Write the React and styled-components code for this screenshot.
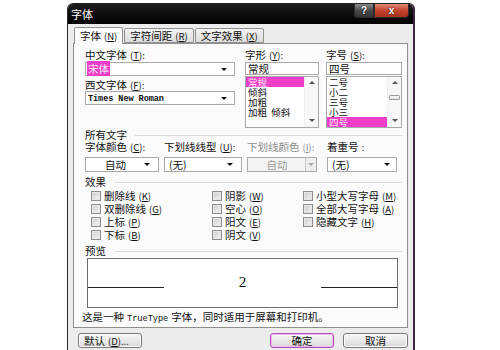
import React from 'react';
import styled, { createGlobalStyle } from 'styled-components';

const CJK = `"Noto Sans CJK SC", "Liberation Sans", sans-serif`;
const MONO = `"Liberation Mono", "Noto Sans CJK SC", monospace`;

const GlobalStyle = createGlobalStyle`
  html, body { margin: 0; padding: 0; background: #fff; }
  body { font-family: ${CJK}; font-size: 10.5px; color: #111; }
  * { box-sizing: border-box; }
`;

const Dialog = styled.div`
  margin: 3px 0 0 67px;
  width: 348px;
  height: 347px;
  background: #ececec;
  border-left: 1px solid #2a2a2a;
  border-right: 2px solid #3d2346;
  border-top: 1px solid #222;
  border-radius: 6px 6px 0 0;
  overflow: hidden;
  display: flex;
  flex-direction: column;
`;

const TitleBar = styled.div`
  height: 20px;
  flex: none;
  background: linear-gradient(#1c1c1c, #000);
  display: flex;
  align-items: flex-start;
  justify-content: space-between;
  padding: 0 4px 0 3px;
  color: #fff;
`;

const Title = styled.span`
  font-size: 11px;
  line-height: 20px;
`;

const WinButtons = styled.div`
  display: flex;
`;

const WinBtn = styled.div`
  width: ${p => p.$w}px;
  height: 14px;
  display: flex;
  align-items: center;
  justify-content: center;
  color: #fff;
  font: bold 10px "Liberation Sans", sans-serif;
  border: 1px solid #2b2b2b;
  border-top: none;
  background: ${p => p.$close
    ? 'linear-gradient(#e08a74, #c4452e 50%, #a8301c)'
    : 'linear-gradient(#8a8a8a, #4c4c4c 50%, #333)'};
  border-radius: ${p => p.$close ? '0 0 4px 0' : '0 0 0 4px'};
  text-shadow: 0 0 2px #000;
`;

const Body = styled.div`
  flex: 1;
  padding: 2px 5px 0 5px;
  display: flex;
  flex-direction: column;
`;

const TabRow = styled.div`
  display: flex;
  align-items: flex-end;
  height: 17px;
  padding-left: 1px;
  position: relative;
  z-index: 1;
`;

const Tab = styled.div`
  height: ${p => (p.$active ? 17 : 15)}px;
  padding: 0 5px;
  margin-right: 1px;
  border: 1px solid #8f8f8f;
  border-bottom: ${p => (p.$active ? 'none' : '1px solid #8f8f8f')};
  border-radius: 2px 2px 0 0;
  background: ${p => (p.$active ? '#fbfbfb' : 'linear-gradient(#f3f3f3, #dcdcdc)')};
  margin-bottom: ${p => (p.$active ? -1 : 0)}px;
  display: flex;
  align-items: center;
  line-height: 12px;
  white-space: nowrap;
`;

const Panel = styled.div`
  height: 285px;
  border: 1px solid #8f8f8f;
  background: #fbfbfb;
  padding: 5px 4px 0 11px;
  display: flex;
  flex-direction: column;
`;

const Acc = styled.span`
  font-size: 9.5px;
  margin-left: 3px;
  & u { text-decoration-thickness: 1px; text-underline-offset: 1px; }
`;

const Label = styled.div`
  height: 12px;
  line-height: 12px;
  white-space: nowrap;
  color: ${p => (p.$disabled ? '#8e8e8e' : '#111')};
  margin-top: ${p => p.$mt || 0}px;
`;

const TopRow = styled.div`
  display: flex;
`;

const Col = styled.div`
  width: ${p => p.$w}px;
  margin-left: ${p => p.$ml || 0}px;
  display: flex;
  flex-direction: column;
`;

const Combo = styled.div`
  height: ${p => p.$h || 14}px;
  margin-top: ${p => p.$mt || 0}px;
  border: 1px solid #a9a9a9;
  background: ${p => (p.$disabled ? '#f3f3f3' : '#fff')};
  display: flex;
  align-items: center;
  padding-left: 1px;
`;

const ComboText = styled.span`
  flex: 1;
  line-height: 12px;
  text-align: ${p => (p.$center ? 'center' : 'left')};
  color: ${p => (p.$disabled ? '#9a9a9a' : '#111')};
  padding-left: ${p => p.$pl || 0}px;
  white-space: nowrap;
`;

const MonoText = styled.span`
  font-family: ${MONO};
  font-size: 8.6px;
  font-weight: bold;
  letter-spacing: -0.1px;
  padding-left: 1px;
`;

const Highlight = styled.span`
  background: #ef3fc9;
  color: #ffe6f7;
  padding: 0 1px;
  line-height: 11px;
`;

const Arrow = styled.span`
  width: 0;
  height: 0;
  border-left: 3px solid transparent;
  border-right: 3px solid transparent;
  border-top: 3px solid ${p => p.$c || '#111'};
  margin-right: ${p => p.$mr ?? 7}px;
`;

const ArrowBox = styled.span`
  width: 11px;
  height: 100%;
  border-left: 1px solid #c9c9c9;
  background: #efefef;
  display: flex;
  align-items: center;
  justify-content: center;
`;

const Input = styled.div`
  height: 13px;
  margin-top: 1px;
  border: 1px solid #a9a9a9;
  background: #fff;
  line-height: 11px;
  padding-left: 2px;
`;

const ListBox = styled.div`
  height: 52px;
  margin-top: 1px;
  border: 1px solid #a9a9a9;
  background: #fff;
  display: flex;
  overflow: hidden;
`;

const ListItems = styled.div`
  flex: 1;
  overflow: hidden;
`;

const ListItem = styled.div`
  height: 10px;
  line-height: 10px;
  font-size: 9.5px;
  padding-left: 2px;
  white-space: nowrap;
  background: ${p => (p.$sel ? '#ef3fc9' : 'transparent')};
  color: ${p => (p.$sel ? '#ffe6f7' : '#111')};
`;

const ScrollBar = styled.div`
  width: 14px;
  background: #f7f7f7;
  border-left: 1px solid #ededed;
  position: relative;
  display: flex;
  flex-direction: column;
  justify-content: space-between;
  align-items: center;
  padding: 4px 0 5px;
`;

const Tri = styled.span`
  width: 0;
  height: 0;
  border-left: 3px solid transparent;
  border-right: 3px solid transparent;
  ${p => (p.$up ? 'border-bottom: 3px solid #555;' : 'border-top: 3px solid #555;')}
`;

const Thumb = styled.span`
  position: absolute;
  left: 1px;
  top: 18px;
  width: 11px;
  height: 5px;
  border: 1px solid #a0a0a0;
  border-radius: 1px;
  background: linear-gradient(#fafafa, #dcdcdc);
`;

const Section = styled.div`
  display: flex;
  align-items: center;
  height: 12px;
  line-height: 12px;
  margin-top: ${p => p.$mt || 0}px;
  &::after {
    content: '';
    flex: 1;
    height: 1px;
    background: #dcdcdc;
    margin: 0 0 0 8px;
  }
`;

const FieldGrid = styled.div`
  display: grid;
  grid-template-columns: 74px 78px 70px 75px;
  column-gap: 5px;
  margin-top: ${p => p.$mt || 0}px;
  & > *:nth-child(4n) { margin-left: 5px; }
`;

const Checks = styled.div`
  display: grid;
  grid-template-columns: 121px 91px 1fr;
  margin-left: 6px;
  margin-top: 1px;
`;

const CheckCol = styled.div`
  display: flex;
  flex-direction: column;
`;

const CheckRow = styled.div`
  height: 13px;
  display: flex;
  align-items: center;
  white-space: nowrap;
`;

const Box = styled.span`
  width: 10px;
  height: 10px;
  margin-right: 3px;
  border: 1px solid #8e8e8e;
  background: linear-gradient(135deg, #cdcdcd, #f4f4f4);
  box-shadow: inset 0 0 0 1px #e6e6e6;
  flex: none;
`;

const Preview = styled.div`
  height: 50px;
  width: 311px;
  margin: 1px 0 0 2px;
  border: 1px solid #6e6e6e;
  background: #fff;
  display: flex;
  align-items: center;
`;

const PreviewLine = styled.span`
  width: ${p => p.$w}px;
  height: 1px;
  background: #222;
  margin-top: 9px;
`;

const PreviewText = styled.span`
  flex: 1;
  text-align: center;
  font-family: "Liberation Serif", serif;
  font-size: 15px;
  color: #111;
  margin-top: -1px;
`;

const Note = styled.div`
  margin: 3px 0 0 -3px;
  height: 12px;
  line-height: 12px;
  white-space: nowrap;
`;

const NoteMono = styled.span`
  font-family: ${MONO};
  font-size: 8.6px;
  margin: 0 3px;
`;

const Footer = styled.div`
  display: flex;
  margin-top: 5px;
  padding-left: 5px;
`;

const Spacer = styled.div`
  flex: 1;
`;

const Btn = styled.button`
  width: ${p => p.$w || 64}px;
  height: 15px;
  margin-left: ${p => p.$ml || 0}px;
  padding: 0 0 0 ${p => (p.$left ? 5 : 0)}px;
  border: 1px solid ${p => (p.$primary ? '#b24dbf' : '#7a7a7a')};
  border-radius: 3px;
  background: linear-gradient(#f7f7f7, #e9e9e9 50%, #d9d9d9);
  box-shadow: ${p => (p.$primary ? 'inset 0 0 0 1px #f1b7f2' : 'inset 0 0 0 1px #fbfbfb')};
  font-family: ${CJK};
  font-size: 10.5px;
  line-height: 12px;
  color: #111;
  text-align: ${p => (p.$left ? 'left' : 'center')};
`;

const A = ({ k, colon }) => (
  <Acc>
    (<u>{k}</u>){colon ? ':' : ''}
  </Acc>
);

const checks = [
  [['删除线', 'K'], ['双删除线', 'G'], ['上标', 'P'], ['下标', 'B']],
  [['阴影', 'W'], ['空心', 'O'], ['阳文', 'E'], ['阴文', 'V']],
  [['小型大写字母', 'M'], ['全部大写字母', 'A'], ['隐藏文字', 'H']],
];

export default function App() {
  return (
    <>
      <GlobalStyle />
      <Dialog>
        <TitleBar>
          <Title>字体</Title>
          <WinButtons>
            <WinBtn $w={20}>?</WinBtn>
            <WinBtn $w={35} $close>x</WinBtn>
          </WinButtons>
        </TitleBar>
        <Body>
          <TabRow>
            <Tab $active>字体<A k="N" /></Tab>
            <Tab>字符间距<A k="R" /></Tab>
            <Tab>文字效果<A k="X" /></Tab>
          </TabRow>
          <Panel>
            <TopRow>
              <Col $w={150}>
                <Label>中文字体<A k="T" colon /></Label>
                <Combo $mt={1}>
                  <ComboText><Highlight>宋体</Highlight></ComboText>
                  <Arrow />
                </Combo>
                <Label $mt={3}>西文字体<A k="F" colon /></Label>
                <Combo>
                  <ComboText><MonoText>Times New Roman</MonoText></ComboText>
                  <Arrow />
                </Combo>
              </Col>
              <Col $w={74} $ml={10}>
                <Label>字形<A k="Y" colon /></Label>
                <Input>常规</Input>
                <ListBox>
                  <ListItems>
                    <ListItem $sel>常规</ListItem>
                    <ListItem>倾斜</ListItem>
                    <ListItem>加粗</ListItem>
                    <ListItem>加粗&nbsp;&nbsp;倾斜</ListItem>
                  </ListItems>
                  <ScrollBar>
                    <Tri $up />
                    <Tri />
                  </ScrollBar>
                </ListBox>
              </Col>
              <Col $w={76} $ml={7}>
                <Label>字号<A k="S" colon /></Label>
                <Input>四号</Input>
                <ListBox>
                  <ListItems>
                    <ListItem>二号</ListItem>
                    <ListItem>小二</ListItem>
                    <ListItem>三号</ListItem>
                    <ListItem>小三</ListItem>
                    <ListItem $sel>四号</ListItem>
                  </ListItems>
                  <ScrollBar>
                    <Tri $up />
                    <Thumb />
                    <Tri />
                  </ScrollBar>
                </ListBox>
              </Col>
            </TopRow>

            <Section $mt={1}>所有文字</Section>
            <FieldGrid>
              <Label>字体颜色<A k="C" colon /></Label>
              <Label>下划线线型<A k="U" colon /></Label>
              <Label $disabled>下划线颜色<A k="I" colon /></Label>
              <Label>着重号<Acc>:</Acc></Label>
            </FieldGrid>
            <FieldGrid $mt={4}>
              <Combo $h={15}>
                <ComboText $center>自动</ComboText>
                <Arrow $mr={8} />
              </Combo>
              <Combo $h={15}>
                <ComboText $pl={3}>(无)</ComboText>
                <Arrow $mr={8} />
              </Combo>
              <Combo $h={15} $disabled>
                <ComboText $center $disabled>自动</ComboText>
                <ArrowBox><Arrow $c="#aaa" $mr={0} /></ArrowBox>
              </Combo>
              <Combo $h={15}>
                <ComboText $pl={3}>(无)</ComboText>
                <Arrow $mr={6} />
              </Combo>
            </FieldGrid>

            <Section $mt={4}>效果</Section>
            <Checks>
              {checks.map((col, i) => (
                <CheckCol key={i}>
                  {col.map(([t, k]) => (
                    <CheckRow key={k}>
                      <Box />
                      {t}
                      <A k={k} />
                    </CheckRow>
                  ))}
                </CheckCol>
              ))}
            </Checks>

            <Section $mt={4}>预览</Section>
            <Preview>
              <PreviewLine $w={76} />
              <PreviewText>2</PreviewText>
              <PreviewLine $w={76} />
            </Preview>
            <Note>
              这是一种<NoteMono>TrueType</NoteMono>字体，同时适用于屏幕和打印机。
            </Note>
          </Panel>
          <Footer>
            <Btn $left>默认<Acc>(<u>D</u>)...</Acc></Btn>
            <Spacer />
            <Btn $primary>确定</Btn>
            <Btn $ml={9} $w={65}>取消</Btn>
          </Footer>
        </Body>
      </Dialog>
    </>
  );
}
